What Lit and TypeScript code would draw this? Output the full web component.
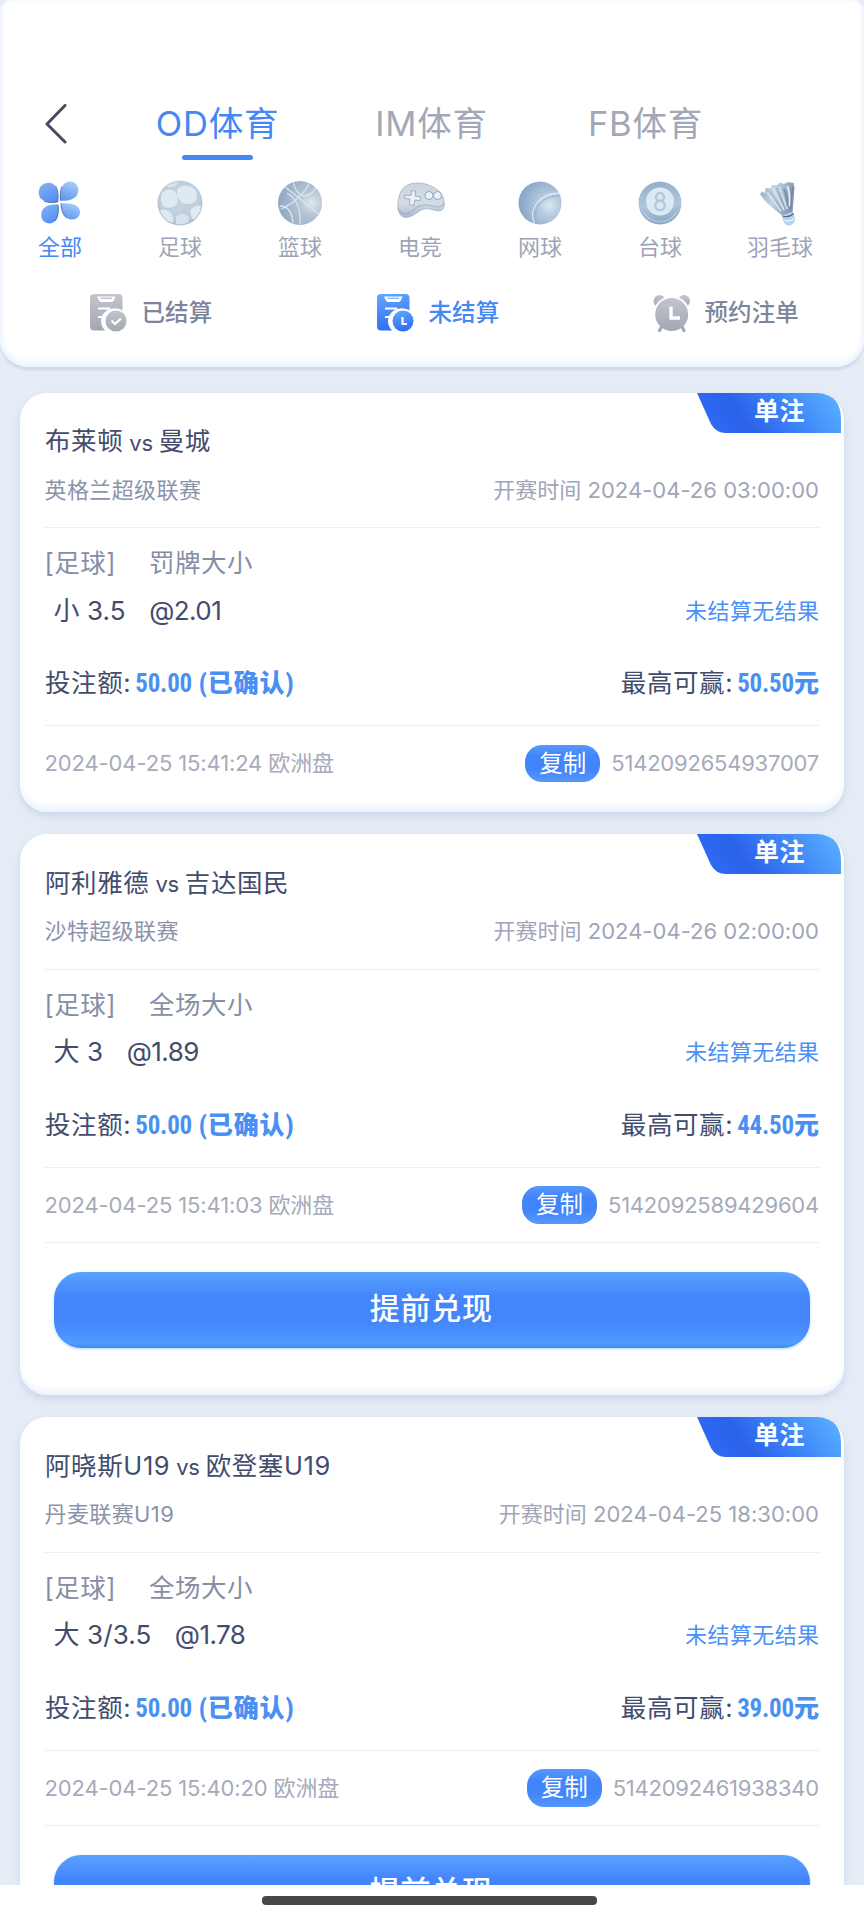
import { LitElement, html, css, svg, nothing } from "lit";
import { customElement, property } from "lit/decorators.js";

const SVG_DEFS = svg`
  <defs>
    <linearGradient id="gray" x1="0" y1="0" x2="0" y2="1"><stop offset="0" stop-color="#c3c5cc"/><stop offset="1" stop-color="#a3a7b3"/></linearGradient>
    <linearGradient id="blue" x1=".2" y1="0" x2=".4" y2="1"><stop offset="0" stop-color="#62a6fc"/><stop offset="1" stop-color="#2f6df6"/></linearGradient>
    <linearGradient id="petalA" x1=".1" y1="0" x2=".6" y2="1"><stop offset="0" stop-color="#86b0f8"/><stop offset="1" stop-color="#5590f3"/></linearGradient>
    <linearGradient id="petalB" x1=".7" y1="0" x2=".3" y2="1"><stop offset="0" stop-color="#a9ccfb"/><stop offset="1" stop-color="#5f98ee"/></linearGradient>
    <radialGradient id="soccer" cx=".5" cy=".45" r=".58"><stop offset="0" stop-color="#c6d3df"/><stop offset=".75" stop-color="#bfcedc"/><stop offset="1" stop-color="#9fb5cc"/></radialGradient>
    <radialGradient id="basket" cx=".76" cy=".5" r=".72"><stop offset="0" stop-color="#e2e8ee"/><stop offset=".35" stop-color="#b9c7d6"/><stop offset="1" stop-color="#93a9c4"/></radialGradient>
    <radialGradient id="tennis" cx=".72" cy=".56" r=".68"><stop offset="0" stop-color="#dbe6f1"/><stop offset=".4" stop-color="#b3c8dd"/><stop offset="1" stop-color="#8ba7c8"/></radialGradient>
    <linearGradient id="pool" x1=".4" y1="0" x2=".5" y2="1"><stop offset="0" stop-color="#93aecb"/><stop offset=".55" stop-color="#afc7dd"/><stop offset=".8" stop-color="#9ab5d0"/><stop offset="1" stop-color="#86a6c6"/></linearGradient>
    <linearGradient id="pad" x1="0" y1="0" x2="0" y2="1"><stop offset="0" stop-color="#cbd5e0"/><stop offset=".6" stop-color="#d3dce6"/><stop offset="1" stop-color="#a9b8ca"/></linearGradient>
    <linearGradient id="feather" x1="0" y1="0" x2="1" y2=".2"><stop offset="0" stop-color="#93aac6"/><stop offset=".45" stop-color="#c3d4e6"/><stop offset=".75" stop-color="#9db2ca"/><stop offset="1" stop-color="#8597b0"/></linearGradient>
    <clipPath id="ball"><circle cx="24" cy="24" r="21.500"/></clipPath>
  </defs>`;

const ICONS: Record<string, unknown> = {
  all: svg`
    <path d="M21.800 22.800C14 24.500 3 23 2.800 14C2.600 8 7 3.800 12.500 3.800C19.500 3.800 23 10 21.800 22.800Z" fill="url(#petalA)"/>
    <path d="M24.600 21.800C23.300 12 26 2.700 34 2.500C39.500 2.500 42.500 7 42.300 11.800C42 19 35 22.200 24.600 21.800Z" fill="url(#petalB)"/>
    <path d="M22 25.600C23.800 36 20.500 44.300 14 44.500C8.500 44.500 5 40.500 5.300 35.700C5.600 28 12 25 22 25.600Z" fill="url(#petalA)"/>
    <path d="M25 24.300C36 23.500 43.800 26 44 33C44 37.700 40 40.700 36 40.500C29 40.300 25.500 35 25 24.300Z" fill="url(#petalB)"/>
    <path d="M8 22.300C13 24 18 23.600 21.800 22.800C22.600 15 21.800 10 19.500 7M24.600 21.800C24 16 24.300 11 26 7.500M22 25.600C23 32 22 38 19 42M25 24.300C25.300 31 27 36 30.500 39" fill="none" stroke="#28518f" stroke-width="1" opacity=".7"/>`,
  soccer: svg`
    <circle cx="24" cy="24" r="22.500" fill="url(#soccer)"/>
    <g clip-path="url(#ball)" fill="#dfe9f2">
      <path d="M6 14Q13 8 19 12Q23 18 21 25Q16 30 8 28Q3 21 6 14Z"/>
      <path d="M22 9Q31 4 39 10Q43 16 39 23Q31 27 25 23Q19 15 22 9Z"/>
      <path d="M4 31Q10 29 15 34Q18 39 17 44L8 41Z"/>
      <path d="M20 38Q26 32 33 38L32 46H20Z" opacity=".8"/>
      <path d="M35 30Q40 25 45 27L44 36L38 41Q33 37 35 30Z"/>
      <path d="M12 5Q18 2 22 3L20 7Q15 9 11 8Z" opacity=".7"/>
    </g>`,
  basket: svg`
    <circle cx="24" cy="24" r="22" fill="url(#basket)"/>
    <g clip-path="url(#ball)" fill="none" stroke="#d9e4ef" stroke-width="1.300">
      <path d="M9 8C20 16 32 27 44 36"/><path d="M5 30C17 25 29 14 34 3"/><path d="M11 14C22 20 25 32 24 47"/><path d="M17 1C18 8 20 13 25 16C32 19 39 12 40 8"/><path d="M4 27C11 27 16 32 17 44"/>
    </g>`,
  pad: svg`
    <g transform="translate(0 2)">
      <path d="M3 16C5 6 12 2 22 2C31 2 42 7 46 14C49 20 49.500 28 45 29.500C40 31 34 26.500 28 28C22 29.500 18 36 10 36.500C3 36.500 0 27 3 16Z" fill="url(#pad)" stroke="#a3b2c4" stroke-width=".8"/>
      <path d="M2 27C4 34 11 34 16 30C22 24 29 22.500 36 25C42 27 47 26 48 22" fill="none" stroke="#93a5bb" stroke-width="1.200" opacity=".6"/>
      <path d="M15.500 9.500L19.500 10L19 15L24.500 16L24 19.500L18.500 19L18 24.500L13.500 23.500L14 18L8.500 17.500L9 14L15 14.500Z" fill="#eef3f8" stroke="#96a7bc" stroke-width=".9"/>
      <g fill="#ebf1f7" stroke="#91a4bb"><circle cx="33" cy="14.500" r="4"/><circle cx="41.500" cy="14.500" r="4"/></g>
    </g>`,
  tennis: svg`
    <circle cx="24" cy="24" r="21.500" fill="url(#tennis)"/>
    <g clip-path="url(#ball)" fill="none"><path d="M18.500 44C12 30 24 12 47 14.500" stroke="#dce8f3" stroke-width="1.300"/><path d="M21 45C14 31 26 15 46 17" stroke="#8fa9c6" stroke-width=".8"/></g>`,
  pool: svg`
    <circle cx="24" cy="24" r="21.500" fill="url(#pool)"/><circle cx="24" cy="22.500" r="14" fill="#dce8f3"/>
    <g fill="none" stroke="#b5c8dc" stroke-width="2.400"><circle cx="24" cy="18" r="4"/><circle cx="24" cy="26.500" r="4.700"/></g>
    <path d="M8 34C15 45 32 46 40 34" fill="none" stroke="#c3d7ea" stroke-width="1.500" opacity=".6"/>`,
  shuttle: svg`
    <path d="M4 15L6 12.500L9 14L9.500 9L15 9.500L16 6L21 6L24 3.500L28 5L32 3L37.500 4L38.500 9L36.500 34L27 37.500C20 31 10 25 4 15Z" fill="url(#feather)"/>
    <path d="M11 13L25 32M17 9L28 31M23.500 8L31 30" stroke="#d3e1ef" stroke-width="1.800"/>
    <path d="M14 12L27 33M20.500 9L30 31" stroke="#8ba2bf" stroke-width=".9"/>
    <path d="M28 10Q32 20 31.500 27" stroke="#7c8ca5" stroke-width="1.800" fill="none"/><path d="M31.500 7Q34.500 16 33.500 27" stroke="#eeece9" stroke-width="1.800" fill="none"/><path d="M36.500 8L34.800 30" stroke="#71829c" stroke-width="1.400"/>
    <path d="M26 36.500L37 32.500L39 40C38.500 48 29 49 27 41Z" fill="#b4d2ee"/><path d="M26.500 37Q33 39 37.500 34.500" stroke="#526c8e" stroke-width="1.100" fill="none"/>
    <path d="M28.500 41Q34 43.500 38 39.500" stroke="#e6f3fd" stroke-width="1.500" fill="none"/>`,
};

const sheet = (paint: string, mark: unknown) => svg`
  <path d="M4 0H28.500Q32.500 0 32.500 4V18A12 12 0 0 0 15 36.500H4Q0 36.500 0 32.500V4Q0 0 4 0Z" fill="${paint}"/>
  <path d="M7 2.500H25.500L23.500 7Q23 8 21.800 8H11Q9.800 8 9.300 7Z" fill="#fff"/><path d="M10.500 4.300H22" stroke="${paint === "url(#gray)" ? "#c3c5cc" : "#8fbcfb"}" stroke-width="1.500"/>
  <path d="M8 14.500H20M8 23H15" stroke="#fff" stroke-width="2"/>
  <circle cx="26" cy="27" r="12.500" fill="#fff"/><circle cx="26" cy="27" r="10.500" fill="${paint}"/>${mark}`;

const FILTER_ICONS: Record<string, unknown> = {
  settled: sheet("url(#gray)", svg`<path d="M21.500 26.500L25 30L31 24.500" stroke="#fff" stroke-width="2.300" fill="none"/>`),
  open: sheet("url(#blue)", svg`<path d="M25.500 23V30H30" stroke="#fff" stroke-width="2.200" fill="none"/>`),
  booked: svg`
    <g fill="url(#gray)"><circle cx="6.500" cy="7" r="6"/><circle cx="31" cy="7" r="6"/></g>
    <circle cx="18.700" cy="20.500" r="18.500" fill="#fff"/>
    <path d="M9 32L6.500 36.500M28.500 32L31 36.500" stroke="#a3a7b3" stroke-width="3.200" stroke-linecap="round"/>
    <circle cx="18.700" cy="20.500" r="16.500" fill="url(#gray)"/>
    <path d="M18 12.500V24H27" fill="none" stroke="#fff" stroke-width="3.400"/>`,
};

interface Bet {
  home: string; away: string; league: string; start: string; market: string;
  pick: string; odds: string; win: string; placed: string; id: string; cashOut: boolean;
}

const BETS: Bet[] = [
  { home: "布莱顿", away: "曼城", league: "英格兰超级联赛", start: "2024-04-26 03:00:00", market: "罚牌大小", pick: "小 3.5", odds: "@2.01", win: "50.50", placed: "2024-04-25 15:41:24", id: "5142092654937007", cashOut: false },
  { home: "阿利雅德", away: "吉达国民", league: "沙特超级联赛", start: "2024-04-26 02:00:00", market: "全场大小", pick: "大 3", odds: "@1.89", win: "44.50", placed: "2024-04-25 15:41:03", id: "5142092589429604", cashOut: true },
  { home: "阿晓斯U19", away: "欧登塞U19", league: "丹麦联赛U19", start: "2024-04-25 18:30:00", market: "全场大小", pick: "大 3/3.5", odds: "@1.78", win: "39.00", placed: "2024-04-25 15:40:20", id: "5142092461938340", cashOut: true },
];

@customElement("bet-card")
class BetCard extends LitElement {
  @property({ attribute: false }) bet!: Bet;

  static styles = css`
    :host { display: block; flex: none; line-height: 32px; }
    .card { position: relative; box-sizing: border-box; height: 419.500px; padding: 0 25px 0 24.500px; border-radius: 27px; background: #fff;
      box-shadow: 0 4px 6px -1px #c8d7eb, 0 4px 14px #d9e3f1, inset 0 -8px 8px -4px #e9f1fb; display: flex; flex-direction: column; }
    .tall { height: 561px; }
    .badge { position: absolute; top: 0; right: 3px; width: 144px; height: 40px; }
    .badge svg { display: block; }
    .badge span { position: absolute; left: 57px; top: 0; line-height: 37px; font-size: 25px; font-weight: 600; letter-spacing: .5px; color: #fff; white-space: nowrap; }
    .row { display: flex; align-items: center; justify-content: space-between; white-space: pre; flex: none; box-sizing: border-box; }
    .title { height: 73px; padding: 24.500px 0 0 .5px; justify-content: flex-start; font-size: 25.500px; letter-spacing: .6px; color: #424c6d; }
    .vs { font-size: 22px; letter-spacing: -.3px; margin: 3px 6px 0; }
    .meta { height: 61.500px; font-size: 22px; letter-spacing: .4px; color: #8b93ab; padding-bottom: 13px; }
    .date { color: #a0a5b9; letter-spacing: .02px; }
    .line { height: 1px; background: #eceef3; flex: none; }
    .market { height: 60px; padding-top: 10px; justify-content: flex-start; gap: 33px; font-size: 25.500px; letter-spacing: .5px; color: #868ea6; }
    .pick { height: 45px; padding-left: 9px; color: #424c6d; font-size: 26px; }
    .pick .left { display: flex; gap: 23.500px; }
    .odds { letter-spacing: -.55px; }
    .choice { letter-spacing: .1px; }
    .state { font-size: 22px; letter-spacing: .4px; color: #4c8ff5; margin-right: -.5px; }
    .money { height: 92px; padding: 9px 0 0 .5px; font-size: 25.500px; letter-spacing: .6px; color: #424c6d; }
    .money b { color: #4a90f3; font-weight: 900; font-family: "Roboto Condensed", "Liberation Sans Narrow", "Noto Sans CJK SC", sans-serif; font-size: 25px; letter-spacing: .9px; margin-left: 4px; }
    .money .right b { letter-spacing: 0; }
    .money .num { font-family: "Liberation Sans Narrow", "Roboto Condensed", sans-serif; font-weight: 700; font-size: 25px; letter-spacing: -.2px; }
    .foot { height: 74.500px; font-size: 22px; letter-spacing: -.13px; color: #a6aabb; }
    .foot .ticket { display: flex; align-items: center; gap: 11px; letter-spacing: -.22px; }
    .copy { width: 75px; height: 37.500px; border-radius: 17px; background: linear-gradient(#5599fa, #4285fb 30%, #4285fb 65%, #5598fb); color: #fff; font-size: 23.500px; letter-spacing: 0; line-height: 38px; text-align: center; }
    .cash { margin: 28.500px 9px 0; height: 76.500px; flex: none; border-radius: 27px; background: linear-gradient(#59a3ff, #4485fb 32%, #4485fb 65%, #4f9cff 94%, #4587ea);
      box-shadow: 0 1px 3px #b5d6fb; color: #fff; font-size: 30px; letter-spacing: .8px; font-weight: 500; text-align: center; line-height: 73px; text-indent: -1px; }
  `;

  render() {
    const b = this.bet;
    return html`
      <div class="card ${b.cashOut ? "tall" : ""}">
        <div class="badge">
          <svg width="144" height="40" viewBox="0 0 144 40">
            <defs><linearGradient id="tag" x1="0" y1=".6" x2="1" y2=".4"><stop offset="0" stop-color="#2e6cf3"/><stop offset=".3" stop-color="#2b62ea"/><stop offset=".6" stop-color="#3b80f6"/><stop offset="1" stop-color="#56acff"/></linearGradient></defs>
            <path d="M0 0H121Q144 2 144 26V40H29Q19 40 14 31Z" fill="url(#tag)"/>
          </svg>
          <span>单注</span>
        </div>
        <div class="row title"><span>${b.home}</span><span class="vs">vs</span><span>${b.away}</span></div>
        <div class="row meta"><span>${b.league}</span><span class="date">开赛时间 ${b.start}</span></div>
        <div class="line"></div>
        <div class="row market"><span>[足球]</span><span>${b.market}</span></div>
        <div class="row pick"><span class="left"><span class="choice">${b.pick}</span><span class="odds">${b.odds}</span></span><span class="state">未结算无结果</span></div>
        <div class="row money"><span>投注额:<b><span class="num">50.00</span> (已确认)</b></span><span class="right">最高可赢:<b><span class="num">${b.win}</span>元</b></span></div>
        <div class="line"></div>
        <div class="row foot"><span>${b.placed} 欧洲盘</span><span class="ticket"><span class="copy">复制</span><span>${b.id}</span></span></div>
        ${b.cashOut ? html`<div class="line"></div><div class="cash">提前兑现</div>` : nothing}
      </div>`;
  }
}

@customElement("app-root")
class AppRoot extends LitElement {
  static styles = css`
    :host { display: flex; flex-direction: column; width: 864px; height: 1920px; overflow: hidden; background: #e6edf6; font-family: Inter, "Noto Sans CJK SC", sans-serif; }
    .head { box-sizing: border-box; height: 366.500px; flex: none; padding-top: 88px; background: #fff; border-radius: 10px 10px 28px 28px;
      box-shadow: 0 3px 3px #cbd7e9, inset 0 -8px 9px -3px #edf3fc, inset 4px 0 5px -2px #edf3fc, inset -4px 0 5px -2px #edf3fc; }
    .tabs { height: 72px; display: flex; }
    .back { width: 64px; padding: 16px 0 0 45px; margin-right: 46.500px; box-sizing: border-box; }
    .tab { width: 214px; display: flex; flex-direction: column; align-items: center; font-size: 34.500px; letter-spacing: .8px; color: #a3a8b9; line-height: 72px; white-space: nowrap; }
    .tab::after { content: ""; width: 71px; height: 5px; border-radius: 3px; flex: none; margin-top: -5px; }
    .on { color: #4388f4; }
    .tab.on::after { background: #4388f4; }
    .sports { display: grid; grid-template-columns: repeat(7, 120px); height: 112px; padding-top: 19px; box-sizing: border-box; }
    .sport { display: flex; flex-direction: column; align-items: center; font-size: 22px; line-height: 32px; color: #9ea4b7; gap: 3.500px; }
    .sport svg { width: 50px; height: 48px; flex: none; overflow: visible; }
    .sport.on { color: #4388f4; }
    .filters { display: grid; grid-template-columns: 287px 276px auto; padding: 22px 0 0 90px; }
    .filter { display: flex; align-items: center; gap: 14.500px; font-size: 23.500px; letter-spacing: .1px; font-weight: 500; color: #7d859b; line-height: 36px; white-space: nowrap; }
    .filter svg { overflow: visible; flex: none; }
    .filter.on { color: #4388f4; }
    .list { display: flex; flex-direction: column; gap: 22px; padding: 26px 20px 0; flex: 1; min-height: 0; overflow: hidden; }
    .nav { height: 35px; flex: none; background: #fff; display: flex; padding: 11px 0 0 262px; box-sizing: border-box; }
    .handle { width: 335px; height: 8.500px; border-radius: 4px; background: #474747; }
  `;

  render() {
    const sports = [["all", "全部"], ["soccer", "足球"], ["basket", "篮球"], ["pad", "电竞"], ["tennis", "网球"], ["pool", "台球"], ["shuttle", "羽毛球"]];
    const filters = [["settled", "已结算"], ["open", "未结算"], ["booked", "预约注单"]];
    return html`
      <div class="head">
        <div class="tabs">
          <div class="back"><svg width="22" height="40" viewBox="0 0 22 40"><path d="M20 1.500L2 20L20 38" fill="none" stroke="#484a62" stroke-width="3" stroke-linecap="round" stroke-linejoin="round"/></svg></div>
          <div class="tab on">OD体育</div><div class="tab">IM体育</div><div class="tab">FB体育</div>
        </div>
        <div class="sports">
          ${sports.map(([k, t]) => html`<div class="sport ${k === "all" ? "on" : ""}"><svg viewBox="-1 0 50 48">${SVG_DEFS}${ICONS[k]}</svg><span>${t}</span></div>`)}
        </div>
        <div class="filters">
          ${filters.map(([k, t]) => html`<div class="filter ${k === "open" ? "on" : ""}"><svg width="37" height="38" viewBox="0 0 37 38">${SVG_DEFS}${FILTER_ICONS[k]}</svg><span>${t}</span></div>`)}
        </div>
      </div>
      <div class="list">${BETS.map((b) => html`<bet-card .bet=${b}></bet-card>`)}</div>
      <div class="nav"><div class="handle"></div></div>`;
  }
}
